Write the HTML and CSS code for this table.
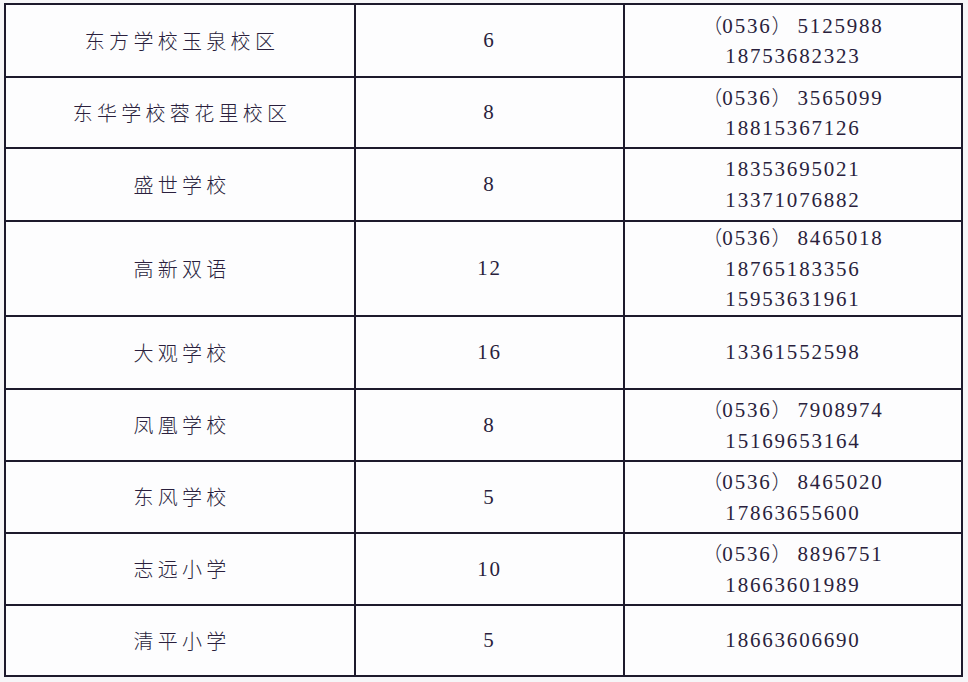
FILE: index.html
```html
<!DOCTYPE html>
<html lang="zh-CN">
<head>
<meta charset="utf-8">
<title>学校名单</title>
<link rel="stylesheet" href="styles.css">
</head>
<body>
<table class="list">
  <colgroup>
    <col class="c-name">
    <col class="c-num">
    <col class="c-tel">
  </colgroup>
  <tbody>
    <tr class="r73"><td class="name">东方学校玉泉校区</td><td class="num">6</td><td class="tel"><span class="p">（</span>0536<span class="p">）</span>5125988<br>18753682323</td></tr>
    <tr class="r71"><td class="name">东华学校蓉花里校区</td><td class="num">8</td><td class="tel"><span class="p">（</span>0536<span class="p">）</span>3565099<br>18815367126</td></tr>
    <tr class="r73"><td class="name">盛世学校</td><td class="num">8</td><td class="tel">18353695021<br>13371076882</td></tr>
    <tr class="r95"><td class="name">高新双语</td><td class="num">12</td><td class="tel"><span class="p">（</span>0536<span class="p">）</span>8465018<br>18765183356<br>15953631961</td></tr>
    <tr class="r73"><td class="name">大观学校</td><td class="num">16</td><td class="tel">13361552598</td></tr>
    <tr class="r72"><td class="name">凤凰学校</td><td class="num">8</td><td class="tel"><span class="p">（</span>0536<span class="p">）</span>7908974<br>15169653164</td></tr>
    <tr class="r72"><td class="name">东风学校</td><td class="num">5</td><td class="tel"><span class="p">（</span>0536<span class="p">）</span>8465020<br>17863655600</td></tr>
    <tr class="r72"><td class="name">志远小学</td><td class="num">10</td><td class="tel"><span class="p">（</span>0536<span class="p">）</span>8896751<br>18663601989</td></tr>
    <tr class="r71"><td class="name">清平小学</td><td class="num">5</td><td class="tel">18663606690</td></tr>
  </tbody>
</table>
</body>
</html>
```
FILE: styles.css
```css
html, body {
  margin: 0;
  padding: 0;
  background: #f6f6f8;
}
body {
  width: 968px;
  height: 682px;
  overflow: hidden;
}
.list {
  margin: 3px 0 0 4px;
  width: 959px;
  table-layout: fixed;
  border-collapse: separate;
  border-spacing: 0;
  border-top: 2px solid #1d1a2c;
  border-left: 2px solid #1d1a2c;
  background: #fdfdfe;
  color: #2a1f3d;
}
.c-name { width: 350px; }
.c-num { width: 269px; }
.c-tel { width: 338px; }
.list td {
  box-sizing: border-box;
  padding: 0;
  border-right: 2px solid #1d1a2c;
  border-bottom: 2px solid #1d1a2c;
  text-align: center;
  vertical-align: middle;
}
.r71 td { height: 71px; }
.r72 td { height: 72px; }
.r73 td { height: 73px; }
.r95 td { height: 95px; }
.name {
  font-family: "Noto Sans CJK SC", "Noto Sans", sans-serif;
  font-weight: 300;
  font-size: 20px;
  letter-spacing: 4.3px;
  text-indent: 4px;
  line-height: 30px;
}
.num, .tel {
  font-family: "Liberation Serif", "Noto Sans CJK SC", serif;
  font-size: 21px;
  letter-spacing: 1.8px;
  line-height: 30.5px;
}
.tel {
  padding-left: 4px;
}
.p {
  font-family: "Noto Sans CJK SC", sans-serif;
  font-weight: 300;
  font-size: 20px;
  letter-spacing: 0;
}
.p + .p, .tel .p:nth-of-type(2) {
  margin-right: 6px;
}
```
